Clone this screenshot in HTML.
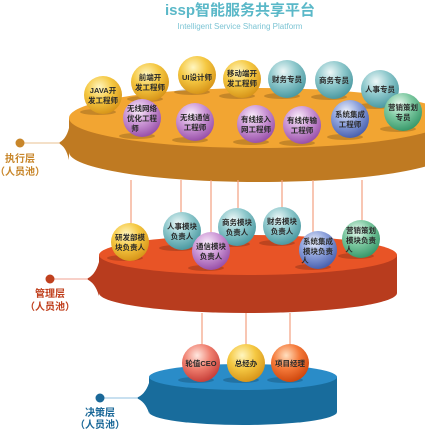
<!DOCTYPE html>
<html><head><meta charset="utf-8"><style>
html,body{margin:0;padding:0;background:#fff;width:425px;height:429px;overflow:hidden}
svg{display:block}
text{font-family:"Liberation Sans","Noto Sans CJK SC",sans-serif}
.b{font-size:7.5px;fill:#2a2a2a;font-weight:bold;text-anchor:middle}
</style></head><body>
<svg width="425" height="429" viewBox="0 0 425 429" xmlns="http://www.w3.org/2000/svg">
<defs>
<radialGradient id="gy" cx="40%" cy="30%" r="70%"><stop offset="0" stop-color="#fff6c0"/><stop offset=".5" stop-color="#f5c842"/><stop offset="1" stop-color="#d8961a"/></radialGradient>
<radialGradient id="gt" cx="40%" cy="30%" r="70%"><stop offset="0" stop-color="#eef8f8"/><stop offset=".5" stop-color="#8ec8cc"/><stop offset="1" stop-color="#4c9aa2"/></radialGradient>
<radialGradient id="gp" cx="40%" cy="30%" r="70%"><stop offset="0" stop-color="#fbeefc"/><stop offset=".5" stop-color="#cc98d6"/><stop offset="1" stop-color="#9a52aa"/></radialGradient>
<radialGradient id="gb" cx="40%" cy="30%" r="70%"><stop offset="0" stop-color="#eef2fc"/><stop offset=".5" stop-color="#8ea2dc"/><stop offset="1" stop-color="#4a62b0"/></radialGradient>
<radialGradient id="gg" cx="40%" cy="30%" r="70%"><stop offset="0" stop-color="#eafaf0"/><stop offset=".5" stop-color="#7cc8a0"/><stop offset="1" stop-color="#3a9a6c"/></radialGradient>
<radialGradient id="gr" cx="40%" cy="30%" r="70%"><stop offset="0" stop-color="#ffe8e0"/><stop offset=".5" stop-color="#f08070"/><stop offset="1" stop-color="#c8403a"/></radialGradient>
<radialGradient id="go" cx="40%" cy="30%" r="70%"><stop offset="0" stop-color="#ffe0c0"/><stop offset=".5" stop-color="#f57a3a"/><stop offset="1" stop-color="#d0480e"/></radialGradient>
</defs>
<text x="240" y="15" font-size="15" font-weight="bold" fill="#5ab8c8" text-anchor="middle">issp智能服务共享平台</text>
<text x="240" y="29" font-size="8" fill="#7cc4d4" text-anchor="middle">Intelligent Service Sharing Platform</text>

<path d="M69 118 L69 152 A190 30 0 0 0 449 152 L449 118 Z" fill="#bf7a22"/>
<ellipse cx="259" cy="118" rx="190" ry="30" fill="#f2a532"/>
<path d="M58 143 Q66 140 69 128 L69 160 Q66 146 58 143 Z" fill="#bf7a22"/>
<line x1="20" y1="143" x2="60" y2="143" stroke="#e8c090" stroke-width="1"/>
<circle cx="20" cy="143" r="4.5" fill="#c8862a"/>
<text x="20" y="162" font-size="10" font-weight="bold" fill="#c8862a" text-anchor="middle">执行层</text>
<text x="20" y="175" font-size="10" font-weight="bold" fill="#c8862a" text-anchor="middle">（人员池）</text>

<g stroke="#f4a080" stroke-width="1.2">
<line x1="131" y1="180" x2="131" y2="225"/><line x1="181" y1="180" x2="181" y2="213"/>
<line x1="211" y1="180" x2="211" y2="233"/><line x1="238" y1="180" x2="238" y2="208"/>
<line x1="282" y1="180" x2="282" y2="208"/><line x1="313" y1="180" x2="313" y2="232"/>
<line x1="362" y1="180" x2="362" y2="221"/>
<line x1="202" y1="313" x2="202" y2="345"/><line x1="246" y1="313" x2="246" y2="345"/><line x1="290" y1="313" x2="290" y2="345"/>
</g>

<path d="M99 255 L99 293 A149 20 0 0 0 397 293 L397 255 Z" fill="#b83c1e"/>
<ellipse cx="248" cy="255" rx="149" ry="20" fill="#e85426"/>
<path d="M86 279 Q95 276 99 262 L99 296 Q95 282 86 279 Z" fill="#b83c1e"/>
<line x1="50" y1="279" x2="88" y2="279" stroke="#f0a090" stroke-width="1"/>
<circle cx="50" cy="279" r="4.5" fill="#c0401e"/>
<text x="50" y="297" font-size="10" font-weight="bold" fill="#c0401e" text-anchor="middle">管理层</text>
<text x="50" y="310" font-size="10" font-weight="bold" fill="#c0401e" text-anchor="middle">（人员池）</text>

<path d="M149 377 L149 412 A94 13 0 0 0 337 412 L337 377 Z" fill="#186c9c"/>
<ellipse cx="243" cy="377" rx="94" ry="13" fill="#2a8cc8"/>
<path d="M136 398 Q145 395 149 383 L149 413 Q145 401 136 398 Z" fill="#186c9c"/>
<line x1="100" y1="398" x2="138" y2="398" stroke="#90c0e0" stroke-width="1"/>
<circle cx="100" cy="398" r="4.5" fill="#1a6898"/>
<text x="100" y="416" font-size="10" font-weight="bold" fill="#1a6898" text-anchor="middle">决策层</text>
<text x="100" y="428" font-size="10" font-weight="bold" fill="#1a6898" text-anchor="middle">（人员池）</text>

<g fill="#000" opacity=".18">
<ellipse cx="98" cy="112" rx="18" ry="3"/><ellipse cx="145" cy="99" rx="18" ry="3"/><ellipse cx="192" cy="92" rx="18" ry="3"/>
<ellipse cx="237" cy="96" rx="18" ry="3"/><ellipse cx="282" cy="96" rx="18" ry="3"/><ellipse cx="329" cy="97" rx="18" ry="3"/>
<ellipse cx="375" cy="106" rx="18" ry="3"/><ellipse cx="398" cy="129" rx="18" ry="3"/><ellipse cx="137" cy="136" rx="18" ry="3"/>
<ellipse cx="190" cy="140" rx="18" ry="3"/><ellipse cx="251" cy="142" rx="18" ry="3"/><ellipse cx="297" cy="143" rx="18" ry="3"/>
<ellipse cx="345" cy="137" rx="18" ry="3"/>
<ellipse cx="125" cy="258" rx="18" ry="3"/><ellipse cx="177" cy="248" rx="18" ry="3"/><ellipse cx="206" cy="268" rx="18" ry="3"/>
<ellipse cx="232" cy="244" rx="18" ry="3"/><ellipse cx="277" cy="243" rx="18" ry="3"/><ellipse cx="313" cy="267" rx="18" ry="3"/>
<ellipse cx="356" cy="256" rx="18" ry="3"/>
<ellipse cx="196" cy="380" rx="18" ry="3"/><ellipse cx="241" cy="380" rx="18" ry="3"/><ellipse cx="285" cy="380" rx="18" ry="3"/>
</g>

<circle cx="103" cy="95" r="19" fill="url(#gy)"/><text class="b" x="103" y="93">JAVA开</text><text class="b" x="103" y="103">发工程师</text>
<circle cx="150" cy="82" r="19" fill="url(#gy)"/><text class="b" x="150" y="80">前端开</text><text class="b" x="150" y="90">发工程师</text>
<circle cx="197" cy="75" r="19" fill="url(#gy)"/><text class="b" x="197" y="80">UI设计师</text>
<circle cx="242" cy="79" r="19" fill="url(#gy)"/><text class="b" x="242" y="76">移动端开</text><text class="b" x="242" y="86">发工程师</text>
<circle cx="287" cy="79" r="19" fill="url(#gt)"/><text class="b" x="287" y="82">财务专员</text>
<circle cx="334" cy="80" r="19" fill="url(#gt)"/><text class="b" x="334" y="83">商务专员</text>
<circle cx="380" cy="89" r="19" fill="url(#gt)"/><text class="b" x="380" y="92">人事专员</text>
<circle cx="403" cy="112" r="19" fill="url(#gg)"/><text class="b" x="403" y="110">营销策划</text><text class="b" x="403" y="120">专员</text>
<circle cx="142" cy="118" r="19" fill="url(#gp)"/><text class="b" x="142" y="111">无线网络</text><text class="b" x="142" y="121">优化工程</text><text class="b" x="135" y="131">师</text>
<circle cx="195" cy="122" r="19" fill="url(#gp)"/><text class="b" x="195" y="120">无线通信</text><text class="b" x="195" y="130">工程师</text>
<circle cx="256" cy="124" r="19" fill="url(#gp)"/><text class="b" x="256" y="122">有线接入</text><text class="b" x="256" y="132">网工程师</text>
<circle cx="302" cy="125" r="19" fill="url(#gp)"/><text class="b" x="302" y="123">有线传输</text><text class="b" x="302" y="133">工程师</text>
<circle cx="350" cy="119" r="19" fill="url(#gb)"/><text class="b" x="350" y="117">系统集成</text><text class="b" x="350" y="127">工程师</text>

<circle cx="130" cy="242" r="19" fill="url(#gy)"/><text class="b" x="130" y="240">研发部模</text><text class="b" x="130" y="250">块负责人</text>
<circle cx="182" cy="231" r="19" fill="url(#gt)"/><text class="b" x="182" y="229">人事模块</text><text class="b" x="182" y="239">负责人</text>
<circle cx="237" cy="227" r="19" fill="url(#gt)"/><text class="b" x="237" y="225">商务模块</text><text class="b" x="237" y="235">负责人</text>
<circle cx="282" cy="226" r="19" fill="url(#gt)"/><text class="b" x="282" y="224">财务模块</text><text class="b" x="282" y="234">负责人</text>
<circle cx="211" cy="251" r="19" fill="url(#gp)"/><text class="b" x="211" y="249">通信模块</text><text class="b" x="211" y="259">负责人</text>
<circle cx="318" cy="250" r="19" fill="url(#gb)"/><text class="b" x="318" y="244">系统集成</text><text class="b" x="318" y="254">模块负责</text><text class="b" x="305" y="263">人</text>
<circle cx="361" cy="239" r="19" fill="url(#gg)"/><text class="b" x="361" y="233">营销策划</text><text class="b" x="361" y="243">模块负责</text><text class="b" x="349" y="252">人</text>

<circle cx="201" cy="363" r="19" fill="url(#gr)"/><text class="b" x="201" y="366">轮值CEO</text>
<circle cx="246" cy="363" r="19" fill="url(#gy)"/><text class="b" x="246" y="366">总经办</text>
<circle cx="290" cy="363" r="19" fill="url(#go)"/><text class="b" x="290" y="366">项目经理</text>
</svg>
</body></html>
